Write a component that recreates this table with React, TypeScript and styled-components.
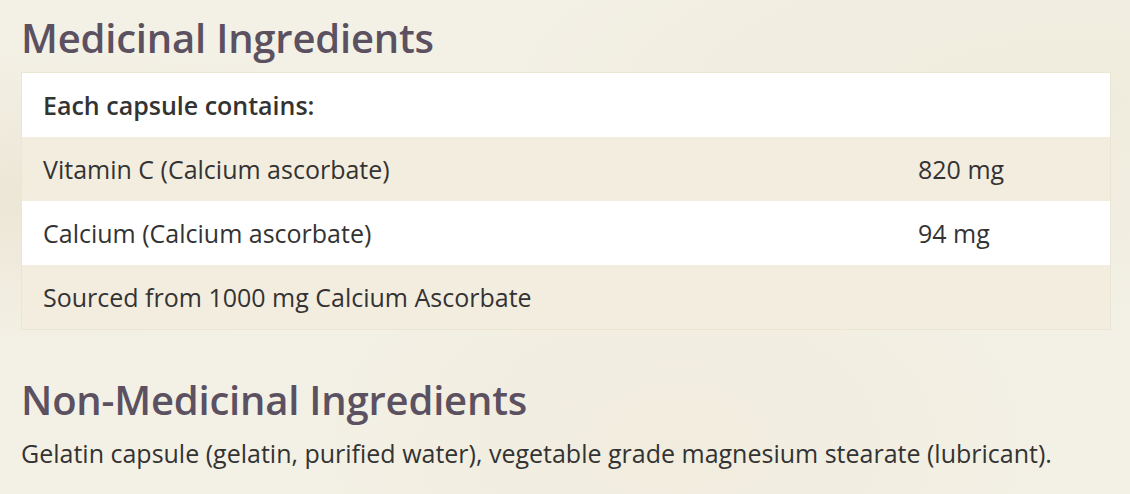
import React from "react";
import styled, { createGlobalStyle } from "styled-components";

const Global = createGlobalStyle`
  html, body { margin: 0; padding: 0; }
  body {
    width: 1130px;
    height: 494px;
    overflow: hidden;
    font-family: "Open Sans", "Noto Sans", sans-serif;
    background-color: #f3f0e5;
    background-image:
      radial-gradient(ellipse at 5% 40%, rgba(230,222,200,0.55), transparent 35%),
      radial-gradient(ellipse at 95% 20%, rgba(235,230,212,0.5), transparent 40%),
      radial-gradient(ellipse at 60% 90%, rgba(238,232,215,0.5), transparent 40%);
  }
`;

const Page = styled.main`
  padding: 12px 19px 0 21px;
  color: #333;
`;

const Heading = styled.h2`
  margin: 0;
  font-family: "Open Sans", "Noto Sans", sans-serif;
  font-weight: 600;
  font-size: 40px;
  line-height: 52px;
  color: #5c5160;
  letter-spacing: -0.2px;
`;

const Table = styled.div`
  margin-top: 8px;
  border: 1px solid #ebe5d3;
  display: flex;
  flex-direction: column;
`;

const Row = styled.div<{ $shade?: boolean }>`
  display: grid;
  grid-template-columns: 875px 1fr;
  height: 64px;
  align-items: center;
  background: ${(p) => (p.$shade ? "#f3ede0" : "#ffffff")};
`;

const Cell = styled.div<{ $bold?: boolean }>`
  padding-left: 21px;
  font-size: 25px;
  line-height: 32px;
  font-weight: ${(p) => (p.$bold ? 600 : 400)};
  color: #333;
  white-space: nowrap;
`;

const Section = styled.section`
  margin-top: 44px;
`;

const Body = styled.p`
  margin: 11px 0 0;
  font-size: 25px;
  line-height: 32px;
  color: #333;
`;

export default function App() {
  return (
    <>
      <Global />
      <Page>
        <Heading>Medicinal Ingredients</Heading>
        <Table>
          <Row>
            <Cell $bold>Each capsule contains:</Cell>
          </Row>
          <Row $shade>
            <Cell>Vitamin C (Calcium ascorbate)</Cell>
            <Cell>820 mg</Cell>
          </Row>
          <Row>
            <Cell>Calcium (Calcium ascorbate)</Cell>
            <Cell>94 mg</Cell>
          </Row>
          <Row $shade>
            <Cell>Sourced from 1000 mg Calcium Ascorbate</Cell>
          </Row>
        </Table>
        <Section>
          <Heading>Non-Medicinal Ingredients</Heading>
          <Body>
            Gelatin capsule (gelatin, purified water), vegetable grade magnesium stearate (lubricant).
          </Body>
        </Section>
      </Page>
    </>
  );
}
